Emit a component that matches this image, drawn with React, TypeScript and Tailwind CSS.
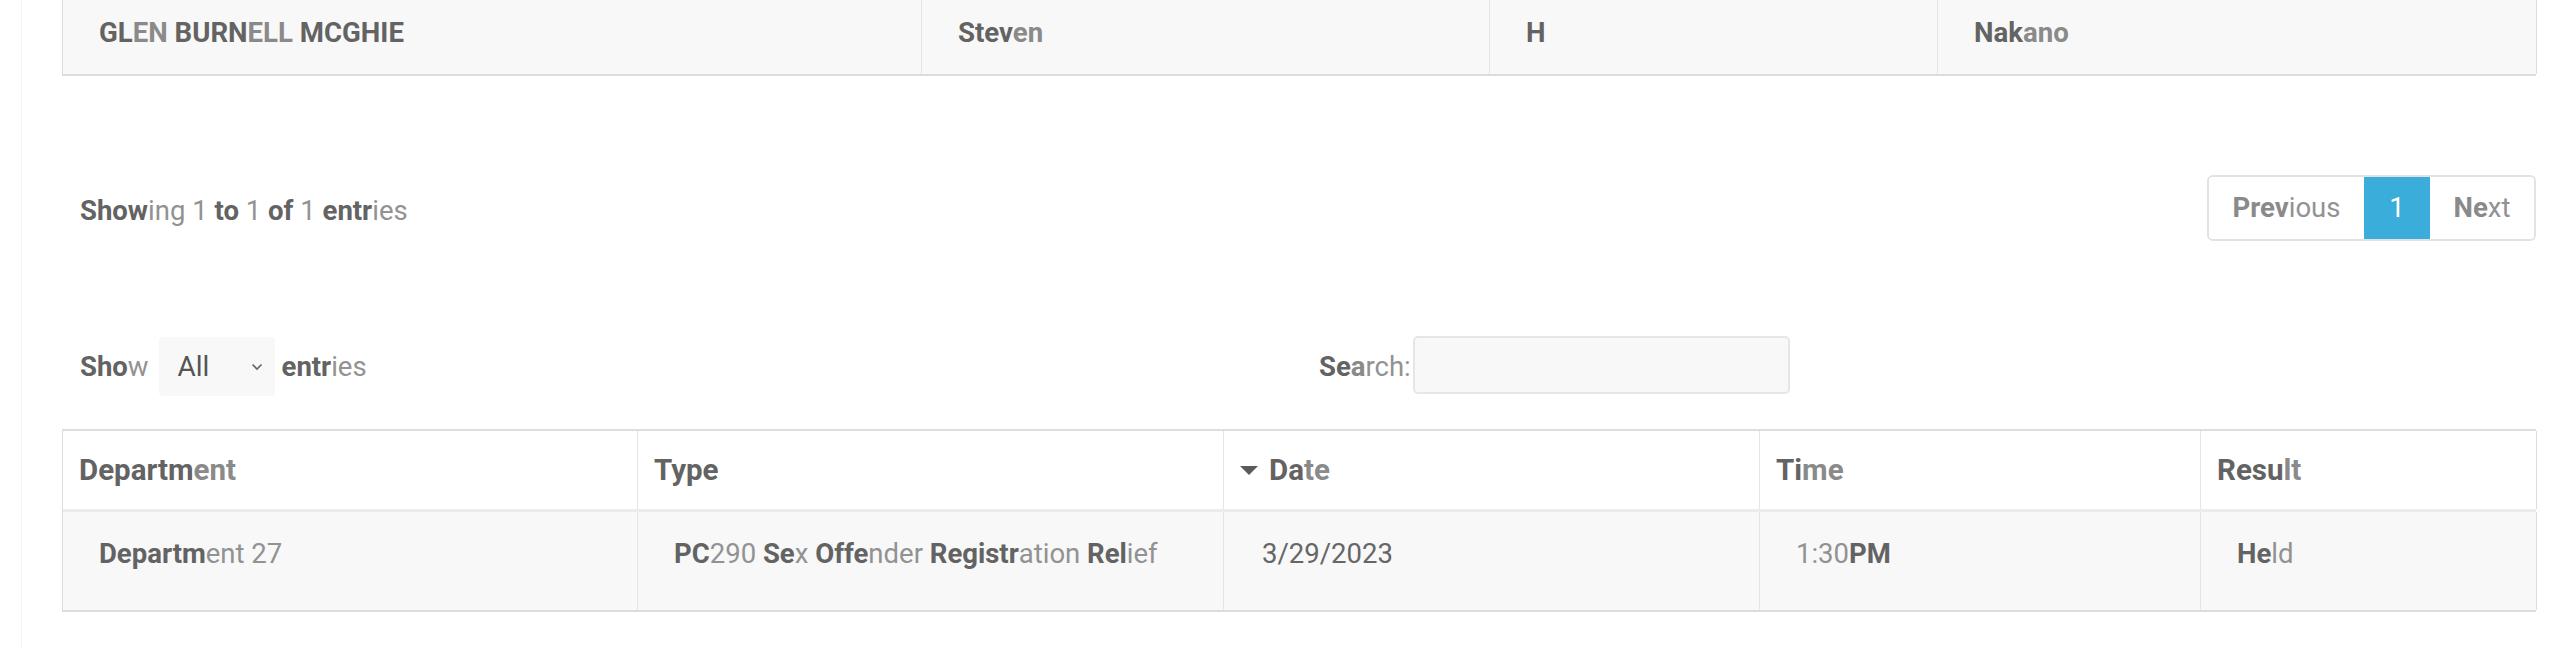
import React from "react";

// bold / light fragments, the page mixes weights inside words
const B: React.FC<{ children: React.ReactNode }> = ({ children }) => (
  <span className="font-bold text-[#636363]">{children}</span>
);
const L: React.FC<{ children: React.ReactNode }> = ({ children }) => (
  <span className="font-normal text-[#929292]">{children}</span>
);
// bold but lighter colour
const BL: React.FC<{ children: React.ReactNode }> = ({ children }) => (
  <span className="font-bold text-[#8a8a8a]">{children}</span>
);

const topCell =
  "h-[74px] pl-[36px] pt-[17px] leading-[32px] text-[27.6px] border-r border-[#e4e4e4] bg-[#f8f8f8]";
const headCell =
  "h-[78px] pl-[16px] flex items-center text-[29.5px] border-r border-[#e4e4e4] bg-white";
const bodyCell =
  "h-[98px] pl-[36px] pt-[25px] leading-[33px] text-[27.5px] border-r border-[#e4e4e4] bg-[#f8f8f8]";

const App: React.FC = () => {
  return (
    <div className="w-[2560px] h-[649px] bg-white overflow-hidden font-['Roboto',sans-serif]">
      <div className="ml-[21px] h-full border-l border-[#f3f3f3] pl-[40px] pr-[24px]">
        {/* top names table, cut off at the top */}
        <div className="grid grid-cols-[859px_568px_448px_599px] border-l border-[#dedede] border-b-2 border-b-[#dcdcdc]">
          <div className={topCell}>
            <B>GL</B>
            <BL>EN</BL> <B>BURN</B>
            <BL>ELL</BL> <B>MCGHIE</B>
          </div>
          <div className={topCell}>
            <B>Stev</B>
            <BL>en</BL>
          </div>
          <div className={topCell}>
            <B>H</B>
          </div>
          <div className={topCell + " border-r-[#dedede]"}>
            <B>Nak</B>
            <BL>ano</BL>
          </div>
        </div>

        {/* info + pagination */}
        <div className="mt-[99px] h-[66px] flex items-center justify-between">
          <div className="pl-[18px] pt-[6px] text-[27.5px]">
            <B>Show</B>
            <L>ing 1 </L>
            <B>to</B>
            <L> 1 </L>
            <B>of</B>
            <L> 1 </L>
            <B>entr</B>
            <L>ies</L>
          </div>
          <div className="flex h-[66px] border-2 border-[#e2e2e2] rounded-[6px] overflow-hidden text-[27.5px]">
            <div className="w-[155px] flex items-center justify-center bg-white">
              <BL>Prev</BL>
              <L>ious</L>
            </div>
            <div className="w-[66px] flex items-center justify-center bg-[#3badda] text-white">
              1
            </div>
            <div className="w-[104px] flex items-center justify-center bg-white">
              <BL>Ne</BL>
              <L>xt</L>
            </div>
          </div>
        </div>

        {/* length + search */}
        <div className="mt-[95px] h-[61px] grid grid-cols-2">
          <div className="flex items-center pl-[18px] text-[27.5px]">
            <B>Sho</B>
            <L>w</L>
            <div className="ml-[10px] w-[116px] h-[59px] rounded-[4px] bg-[#f8f8f8] flex items-center pl-[19px] pr-[12px] justify-between">
              <span className="text-[#555] text-[28px]">All</span>
              <svg width="12" height="8" viewBox="0 0 12 8" fill="none">
                <path d="M1.5 1.5 6 6l4.5-4.5" stroke="#666" strokeWidth="1.6" />
              </svg>
            </div>
            <span className="ml-[7px]">
              <B>entr</B>
              <L>ies</L>
            </span>
          </div>
          <div className="flex items-center pl-[20px] text-[27.5px]">
            <B>Se</B>
            <BL>a</BL>
            <L>rch:</L>
            <div className="ml-[2px] mt-[-4px] w-[377px] h-[58px] rounded-[5px] border-2 border-[#e6e6e6] bg-[#f8f8f8]" />
          </div>
        </div>

        {/* hearings table */}
        <div className="mt-[32px] border-t-2 border-t-[#dedede] border-l border-l-[#dedede] border-b-2 border-b-[#dcdcdc]">
          <div className="grid grid-cols-[575px_586px_536px_441px_336px] border-b-[3px] border-b-[#ececec]">
            <div className={headCell}>
              <B>Departm</B>
              <BL>ent</BL>
            </div>
            <div className={headCell}>
              <B>Type</B>
            </div>
            <div className={headCell}>
              <svg width="18" height="10" viewBox="0 0 18 10" className="mr-[11px] mt-[2px]">
                <path d="M0 0h18L9 9z" fill="#5a5a5a" />
              </svg>
              <B>Da</B>
              <BL>te</BL>
            </div>
            <div className={headCell}>
              <B>Ti</B>
              <BL>me</BL>
            </div>
            <div className={headCell + " border-r-[#dedede]"}>
              <B>Resu</B>
              <BL>lt</BL>
            </div>
          </div>
          <div className="grid grid-cols-[575px_586px_536px_441px_336px]">
            <div className={bodyCell}>
              <B>Departm</B>
              <L>ent 27</L>
            </div>
            <div className={bodyCell}>
              <B>PC</B>
              <L>290 </L>
              <B>Se</B>
              <L>x </L>
              <B>Offe</B>
              <L>nder </L>
              <B>Registr</B>
              <L>ation </L>
              <B>Rel</B>
              <L>ief</L>
            </div>
            <div className={bodyCell + " pl-[38px]"}>
              <span className="text-[#666]">3/29/2023</span>
            </div>
            <div className={bodyCell}>
              <L>1:30</L>
              <B>PM</B>
            </div>
            <div className={bodyCell + " border-r-[#dedede]"}>
              <B>He</B>
              <L>ld</L>
            </div>
          </div>
        </div>
      </div>
    </div>
  );
};

export default App;
